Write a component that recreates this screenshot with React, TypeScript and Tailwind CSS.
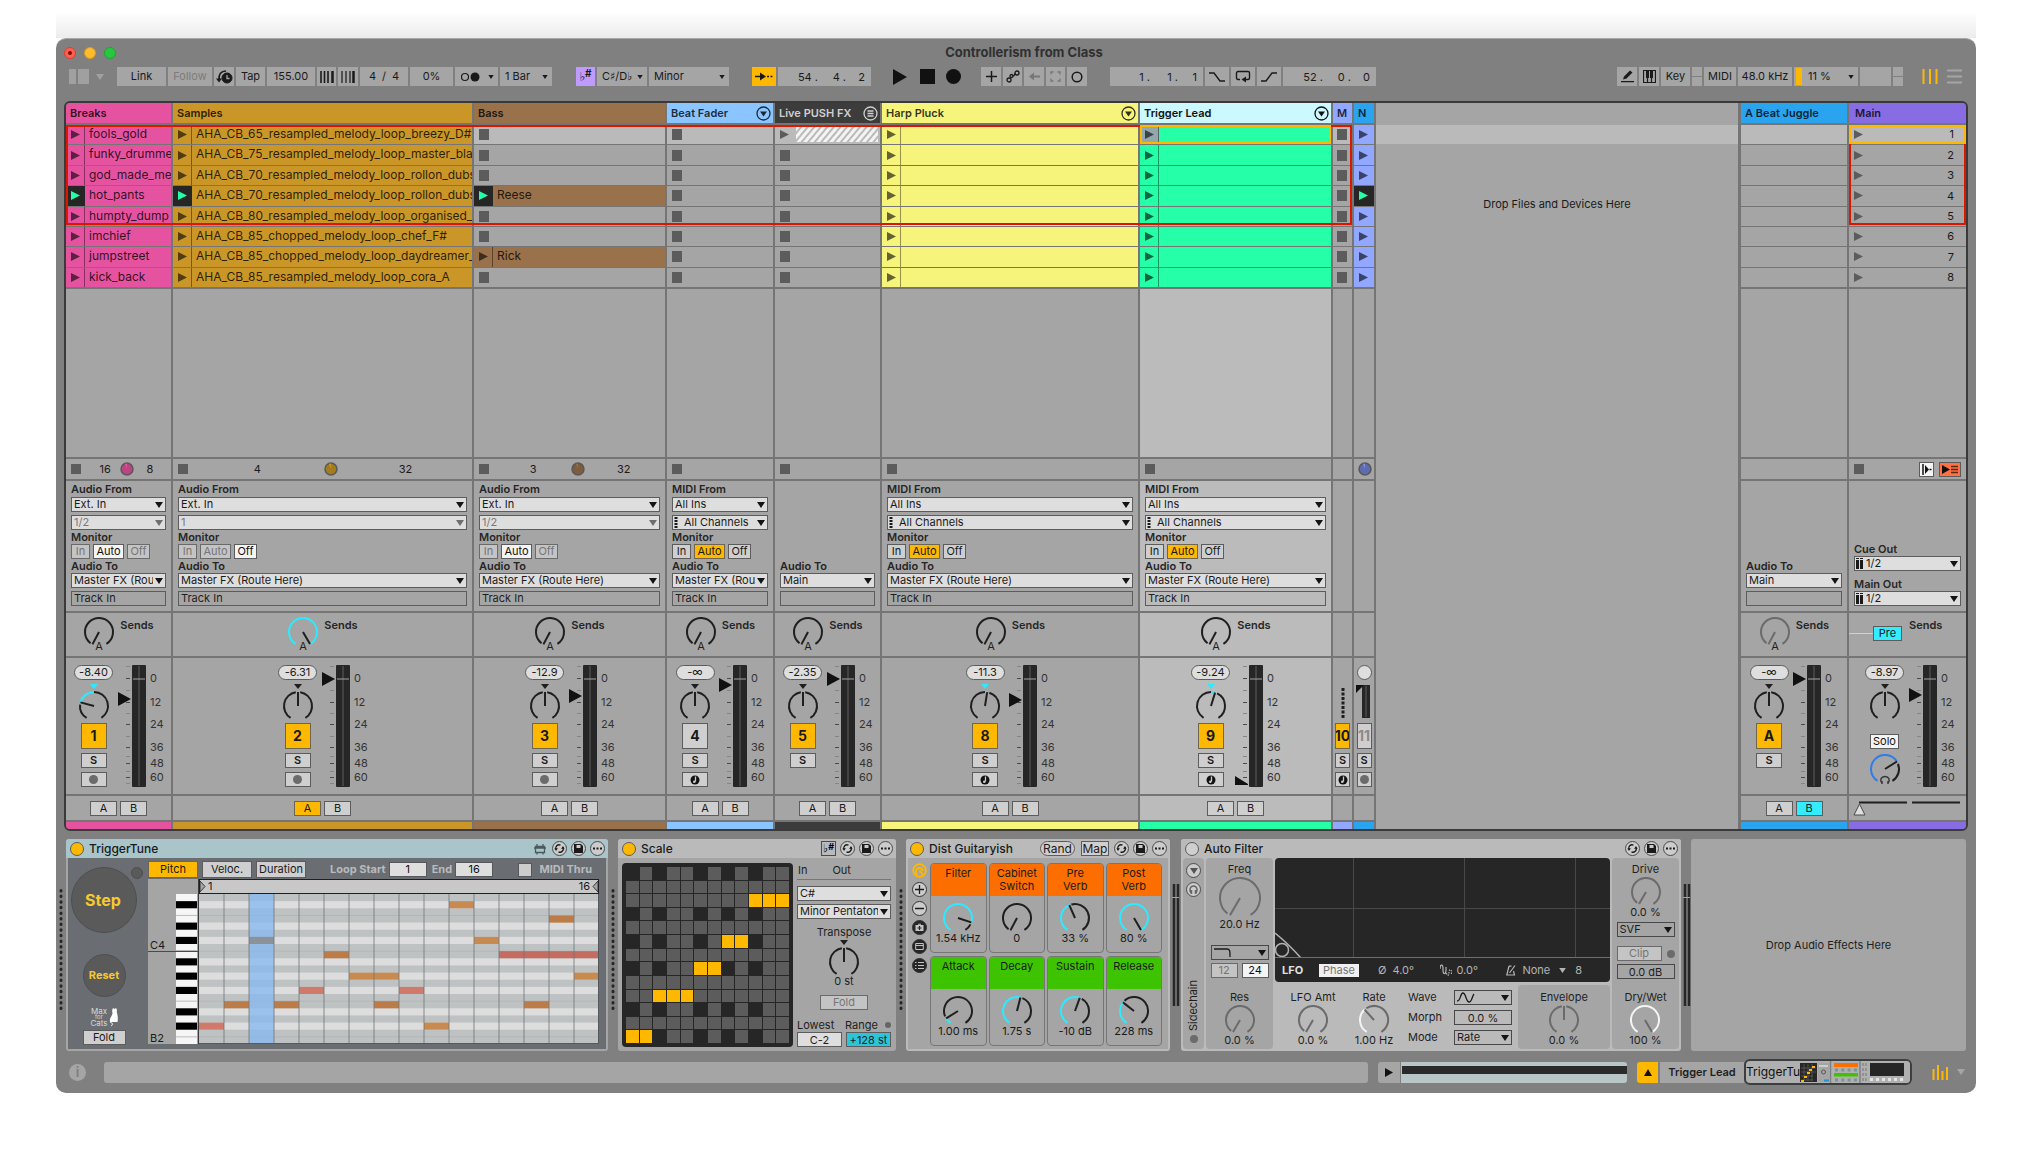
import React, { ReactNode } from 'react';
import clsx from 'clsx';

/* ---------- geometry helpers ---------- */

const polar = (cx: number, cy: number, r: number, deg: number) => {
  const a = ((deg - 90) * Math.PI) / 180;
  return [cx + r * Math.cos(a), cy + r * Math.sin(a)];
};

const arc = (cx: number, cy: number, r: number, from: number, to: number) => {
  const [x1, y1] = polar(cx, cy, r, from);
  const [x2, y2] = polar(cx, cy, r, to);
  return `M${x1.toFixed(2)} ${y1.toFixed(2)}A${r} ${r} 0 ${to - from > 180 ? 1 : 0} 1 ${x2.toFixed(2)} ${y2.toFixed(2)}`;
};

const CYAN = '#2ceaff';
const INK = '#1f1f1f';

type KnobProps = {
  r?: number;
  angle: number;
  fill?: string;
  from?: number;
  base?: string;
  marker?: string;
  tag?: string;
};

function Knob({ r = 14, angle, fill, from = -148, base = INK, marker, tag }: KnobProps) {
  const cx = r + 2;
  const top = marker ? 7 : 0;
  const cy = r + 2 + top;
  const end = 148;
  const [px, py] = polar(cx, cy, r, angle);
  const h = tag ? 35 : r * 2 + 3 + top;
  const lo = Math.max(Math.min(from, angle), -end);
  const hi = Math.min(Math.max(from, angle), end);
  const leftEnd = fill ? lo - (angle < from ? 9 : 0) : angle - 9;
  const rightStart = fill ? hi + (angle > from ? 9 : 0) : angle + 9;
  return (
    <svg width={cx * 2} height={h} viewBox={`0 0 ${cx * 2} ${h}`} fill="none" strokeWidth="2" className="block shrink-0">
      {leftEnd > -end && <path d={arc(cx, cy, r, -end, leftEnd)} stroke={base} />}
      {rightStart < end && <path d={arc(cx, cy, r, rightStart, end)} stroke={base} />}
      {fill && hi - lo > 3 && <path d={arc(cx, cy, r, lo, hi)} stroke={fill} />}
      <path d={`M${cx} ${cy}L${px.toFixed(2)} ${py.toFixed(2)}`} stroke={base} />
      {marker && <path d={`M${cx - 4} 1h8l-4 5z`} fill={marker} />}
      {tag && (
        <text x={cx} y="34" textAnchor="middle" fontSize="11" fill={INK}>
          {tag}
        </text>
      )}
    </svg>
  );
}

function Tri({ className = 'text-[#1c1c1c]' }: { className?: string }) {
  return (
    <svg width="9" height="9" viewBox="0 0 9 9" className={clsx('block', className)}>
      <path d="M0 0l9 4.5L0 9z" fill="currentColor" />
    </svg>
  );
}

function Down({ className, size = 8 }: { className?: string; size?: number }) {
  return (
    <svg width={size} height={size - 2} viewBox="0 0 8 6" className={className}>
      <path d="M0 0h8L4 6z" fill="currentColor" />
    </svg>
  );
}

/* ---------- small controls ---------- */

function Select({ label, value, dim, plain, icon, indent }: { label: string; value: string; dim?: boolean; plain?: boolean; icon?: ReactNode; indent?: boolean }) {
  return (
    <span className="relative block h-[15px] w-full">
      <select
        aria-label={label}
        className={clsx(
          'block h-full w-full appearance-none overflow-hidden rounded-none border pr-3 text-[11px] leading-[13px] whitespace-nowrap outline-none',
          indent ? 'pl-[11px]' : 'pl-0.5',
          plain ? 'border-[#484848] bg-transparent' : 'border-[#5c5c5c] bg-[#dedede]',
          dim ? 'text-[#7a7a7a]' : 'text-[#1a1a1a]',
        )}
      >
        <option>{value}</option>
      </select>
      {icon && <span className="pointer-events-none absolute top-0.5 left-0.5">{icon}</span>}
      <Down className={clsx('pointer-events-none absolute top-[5px] right-[3px]', dim ? 'text-[#6e6e6e]' : 'text-[#141414]')} />
    </span>
  );
}

function Box({ children, tone = 'light', className, label }: { children?: ReactNode; tone?: 'light' | 'white' | 'amber' | 'cyan' | 'off'; className?: string; label?: string }) {
  return (
    <button
      type="button"
      aria-label={label}
      className={clsx(
        'flex h-[15px] shrink-0 items-center justify-center overflow-hidden border text-[11px] leading-none whitespace-nowrap',
        tone === 'light' && 'border-[#5c5c5c] bg-[#cfcfcf] text-[#1a1a1a]',
        tone === 'white' && 'border-[#5c5c5c] bg-[#f4f4f4] text-[#111]',
        tone === 'amber' && 'border-[#6e6650] bg-[#ffb800] text-[#1a1a1a]',
        tone === 'cyan' && 'border-[#5c5c5c] bg-[#33ecff] text-[#1a1a1a]',
        tone === 'off' && 'border-[#6a6a6a] bg-[#c4c4c4] text-[#767676]',
        className,
      )}
    >
      {children}
    </button>
  );
}

const ChannelDots = () => (
  <svg width="4" height="11" viewBox="0 0 4 11">
    <path d="M2 0v11" stroke="#1a1a1a" strokeWidth="3" strokeDasharray="2 1" />
  </svg>
);
const StereoBars = () => (
  <svg width="8" height="11" viewBox="0 0 8 11" fill="#1a1a1a">
    <path d="M0 2h3v9H0zM4 2h3v9H4zM0 0h3v1H0zM4 0h3v1H4z" />
  </svg>
);

/* ---------- top bar ---------- */

function Cell({ children, className, label, spread }: { children?: ReactNode; className?: string; label?: string; spread?: boolean }) {
  return (
    <button
      type="button"
      aria-label={label}
      className={clsx('flex h-[19px] shrink-0 items-center text-[11px] leading-none whitespace-nowrap', spread ? 'justify-between pr-1 pl-[5px]' : 'justify-center', className)}
    >
      {children}
    </button>
  );
}

const G = 'bg-[#a5a5a5]';

function TimeField({ label, parts }: { label: string; parts: string[] }) {
  const w = ['w-10', 'w-7', 'w-[19px]'];
  return (
    <div role="group" aria-label={label} className="flex h-[19px] w-[93px] shrink-0 bg-[#a5a5a5]">
      {parts.map((p, i) => (
        <input key={i} aria-label={`${label} ${i + 1}`} defaultValue={p} className={clsx('h-full bg-transparent text-right text-[11px] outline-none', w[i])} />
      ))}
    </div>
  );
}

const Split = () => (
  <span className="flex h-[19px] w-2.5 shrink-0 flex-col gap-px">
    <span className="flex-1 bg-[#a5a5a5]" />
    <span className="flex-1 bg-[#a5a5a5]" />
  </span>
);

function Toolbar() {
  return (
    <div className="flex items-center gap-0.5 pr-[13px] pl-[13px] text-[#1a1a1a]">
      <button type="button" aria-label="Browser" className="flex h-[15px] w-5 gap-0.5">
        <span className="h-full w-[7px] bg-[#a0a0a0]" />
        <span className="h-full flex-1 bg-[#a0a0a0]" />
      </button>
      <Down className="mr-[11px] ml-[5px] text-[#a0a0a0]" />
      <Cell className={clsx(G, 'w-[49px]')}>Link</Cell>
      <Cell className={clsx(G, 'w-11 text-[#7c7c7c]')}>Follow</Cell>
      <Cell label="Metronome" className={clsx(G, 'w-5')}>
        <svg width="17" height="15" viewBox="0 0 17 15" fill="none" stroke="#1a1a1a">
          <circle cx="11" cy="9" r="5" fill="#1a1a1a" />
          <path d="M11 6v3.500h2.500" stroke="#a5a5a5" strokeWidth="1.3" />
          <path d="M3 11C2.500 5 5 2 10 2" strokeWidth="1.6" />
          <path d="M0 9.500h6l-3 4z" fill="#1a1a1a" stroke="none" />
        </svg>
      </Cell>
      <Cell className={clsx(G, 'w-[29px]')}>Tap</Cell>
      <Cell className={clsx(G, 'w-12')}>155.00</Cell>
      <Cell label="Nudge down" className={clsx(G, 'w-[19px]')}>
        <svg width="14" height="12" viewBox="0 0 14 12" stroke="#1a1a1a">
          <path d="M1 0v12M4.500 0v12M8 0v12" strokeWidth="1.6" />
          <path d="M12.500 0v12" strokeWidth="2.500" />
        </svg>
      </Cell>
      <Cell label="Nudge up" className={clsx(G, 'w-5')}>
        <svg width="14" height="12" viewBox="0 0 14 12" stroke="#1a1a1a">
          <path d="M1 0v12M5 0v12M9 0v12" strokeWidth="1.200" />
          <path d="M12.500 0v12" strokeWidth="2.500" />
        </svg>
      </Cell>
      <Cell className={clsx(G, 'w-12 gap-1.5')}>
        <span>4</span>
        <span>/</span>
        <span>4</span>
      </Cell>
      <Cell className={clsx(G, 'w-[43px]')}>0%</Cell>
      <Cell label="Metronome options" spread className={clsx(G, 'w-[43px]')}>
        <svg width="20" height="10" viewBox="0 0 20 10">
          <circle cx="5" cy="5" r="3.500" fill="none" stroke="#1a1a1a" strokeWidth="1.200" />
          <circle cx="15" cy="5" r="4.500" fill="#1a1a1a" />
        </svg>
        <Down size={6} />
      </Cell>
      <Cell spread className={clsx(G, 'w-[52px]')}>
        1 Bar <Down size={6} />
      </Cell>
      <Cell label="Scale mode" className="ml-[22px] w-[19px] bg-[#bf9bff] text-[12px] font-bold">
        ♭<span className="-mt-2 text-[10px]">#</span>
      </Cell>
      <Cell spread className={clsx(G, 'w-[50px]')}>
        C♯/D♭ <Down size={6} />
      </Cell>
      <Cell spread className={clsx(G, 'w-20')}>
        Minor <Down size={6} />
      </Cell>
      <Cell label="Follow playback" className="ml-[21px] w-6 bg-[#ffb800]">
        <svg width="18" height="9" viewBox="0 0 18 9">
          <path d="M0 4.500h6" stroke="#1a1a1a" strokeWidth="1.500" />
          <path d="M5 0.500l6 4-6 4z" fill="#1a1a1a" />
          <path d="M12 4.500h2M15.500 4.500h2" stroke="#1a1a1a" strokeWidth="1.500" />
        </svg>
      </Cell>
      <TimeField label="Position" parts={['54 .', '4 .', '2']} />
      <Cell label="Play" className="ml-[18px] w-[18px]">
        <svg width="16" height="18" viewBox="0 0 16 18">
          <path d="M1 1l14 8-14 8z" fill="#111" />
        </svg>
      </Cell>
      <Cell label="Stop" className="ml-2 w-[16px]">
        <span className="size-[15px] bg-[#111]" />
      </Cell>
      <Cell label="Record" className="ml-2 w-[16px]">
        <span className="size-[15px] rounded-full bg-[#111]" />
      </Cell>
      <Cell label="MIDI overdub" className={clsx(G, 'ml-[18px] w-5')}>
        <svg width="11" height="11" viewBox="0 0 11 11">
          <path d="M5.500 0v11M0 5.500h11" stroke="#1a1a1a" strokeWidth="1.500" />
        </svg>
      </Cell>
      <Cell label="Automation arm" className={clsx(G, 'w-[19px]')}>
        <svg width="14" height="13" viewBox="0 0 14 13" fill="none" stroke="#1a1a1a" strokeWidth="1.300">
          <circle cx="3" cy="10" r="2" />
          <circle cx="5.500" cy="6" r="1.500" />
          <circle cx="11" cy="3" r="2" />
          <path d="M7 6c2 0 1-2.500 2.500-2.500" />
        </svg>
      </Cell>
      <Cell label="Re-enable automation" className={clsx(G, 'w-5')}>
        <svg width="11" height="9" viewBox="0 0 11 9" fill="none" stroke="#777" strokeWidth="1.800">
          <path d="M11 4.500H4" />
          <path d="M0 4.500L5 .5v8z" fill="#777" stroke="none" />
        </svg>
      </Cell>
      <Cell label="Capture MIDI" className={clsx(G, 'w-[19px]')}>
        <svg width="11" height="11" viewBox="0 0 11 11" fill="none" stroke="#777" strokeWidth="1.300">
          <path d="M1 3.500V1h2.500M7.500 1H10v2.500M10 7.500V10H7.500M3.500 10H1V7.500" />
        </svg>
      </Cell>
      <Cell label="Session record" className={clsx(G, 'w-5')}>
        <svg width="12" height="12" viewBox="0 0 12 12" fill="none" stroke="#1a1a1a" strokeWidth="1.500">
          <circle cx="6" cy="6" r="4.800" />
        </svg>
      </Cell>
      <span className="w-[19px]" />
      <TimeField label="Loop start" parts={['1 .', '1 .', '1']} />
      <Cell label="Punch in" className={clsx(G, 'w-6')}>
        <svg width="16" height="10" viewBox="0 0 16 10" fill="none" stroke="#1a1a1a" strokeWidth="1.400">
          <path d="M0 1h5l6 8h5" />
        </svg>
      </Cell>
      <Cell label="Loop" className={clsx(G, 'w-6')}>
        <svg width="16" height="13" viewBox="0 0 16 13" fill="none" stroke="#1a1a1a" strokeWidth="1.400">
          <path d="M5 9.500H3a1.500 1.500 0 0 1-1.500-1.500V3A1.500 1.500 0 0 1 3 1.500h10A1.500 1.500 0 0 1 14.500 3v5A1.500 1.500 0 0 1 13 9.500h-3" />
          <path d="M11 6.500v6L6.500 9.500z" fill="#1a1a1a" stroke="none" />
        </svg>
      </Cell>
      <Cell label="Punch out" className={clsx(G, 'w-6')}>
        <svg width="16" height="10" viewBox="0 0 16 10" fill="none" stroke="#1a1a1a" strokeWidth="1.400">
          <path d="M0 9h5l6-8h5" />
        </svg>
      </Cell>
      <TimeField label="Loop length" parts={['52 .', '0 .', '0']} />

      <Cell label="Draw mode" className={clsx(G, 'ml-auto w-5')}>
        <svg width="15" height="13" viewBox="0 0 15 13" fill="#1a1a1a">
          <path d="M3 9.500L4 6.500 10 .5l2.500 2L6.500 8.500z" />
          <path d="M1 11h13v1.300H1z" />
        </svg>
      </Cell>
      <Cell label="Computer MIDI keyboard" className={clsx(G, 'w-5')}>
        <svg width="13" height="13" viewBox="0 0 13 13">
          <path d="M.5.500h12v12H.5zM4.500 7v6M8.500 7v6" fill="none" stroke="#1a1a1a" strokeWidth="1.200" />
          <path d="M3 0h3v8H3zM7 0h3v8H7z" fill="#1a1a1a" />
        </svg>
      </Cell>
      <Cell className={clsx(G, 'w-[29px]')}>Key</Cell>
      <Split />
      <Cell className={clsx(G, 'w-8')}>MIDI</Cell>
      <Cell className={clsx(G, 'w-[54px]')}>48.0 kHz</Cell>
      <Cell className={clsx(G, 'w-16 pr-1 pl-0.5')}>
        <span className="h-[17px] w-1.5 bg-[#ffb800]" />
        <span className="ml-1.5">11 %</span>
        <Down size={6} className="ml-auto" />
      </Cell>
      <Cell label="Disk overload" className={clsx(G, 'w-[31px]')} />
      <Split />
      <Cell label="Session view" className="ml-4 w-[18px]">
        <svg width="16" height="15" viewBox="0 0 16 15">
          <path d="M1.500 0v15M8 0v15M14.500 0v15" stroke="#ffb800" strokeWidth="2" />
        </svg>
      </Cell>
      <Cell label="Arrangement view" className="ml-1 w-[18px]">
        <svg width="15" height="15" viewBox="0 0 15 15">
          <path d="M0 1.500h15M0 7.500h15M0 13.500h15" stroke="#a5a5a5" strokeWidth="2" />
        </svg>
      </Cell>
    </div>
  );
}

/* ---------- session tracks ---------- */

type Tone = 'pink' | 'gold' | 'brown' | 'sky' | 'dark' | 'yellow' | 'green' | 'lilac' | 'blue' | 'purple';
const clipBg: Record<Tone, string> = {
  pink: 'bg-[#e553a0]',
  gold: 'bg-[#c99627]',
  brown: 'bg-[#99724b]',
  sky: 'bg-[#8bc5ff]',
  dark: 'bg-[#3c3c3c]',
  yellow: 'bg-[#f7f47c]',
  green: 'bg-[#25ffa8]',
  lilac: 'bg-[#92a7ff]',
  blue: 'bg-[#2aa4ee]',
  purple: 'bg-[#886ce4]',
};

type Clip = { name?: string; kind: 'clip' | 'stop' | 'blank' | 'hatch' | 'scene'; playing?: boolean; selected?: boolean };
const repeat = (c: Clip): Clip[] => Array.from({ length: 8 }, () => ({ ...c }));

function ClipRow({ clip, tone, first, narrow }: { clip: Clip; tone: Tone; first: boolean; narrow?: boolean }) {
  const empty = first ? 'bg-[#bababa]' : 'bg-[#a5a5a5]';
  if (clip.kind === 'blank') return <div className={empty} />;
  if (clip.kind === 'stop')
    return (
      <button type="button" aria-label="Stop clip" className={clsx('flex items-center', narrow ? 'pl-1' : 'pl-[5px]', empty)}>
        <span className="h-[11px] w-2.5 bg-[#5c5c5c]" />
      </button>
    );
  if (clip.kind === 'hatch')
    return (
      <button type="button" aria-label="Launch group" className={clsx('flex items-center pl-[5px]', empty)}>
        <Tri className="text-[#5c5c5c]" />
        <svg height="15" className="mr-0.5 ml-[7px] w-0 flex-1">
          <defs>
            <pattern id="hatch" width="5" height="5" patternUnits="userSpaceOnUse" patternTransform="rotate(40)">
              <path d="M0 0h3v5H0z" fill="#f4f4f4" />
            </pattern>
          </defs>
          <rect width="100%" height="15" fill="url(#hatch)" />
        </svg>
      </button>
    );
  if (clip.kind === 'scene')
    return (
      <button type="button" className={clsx('relative flex items-center justify-between pr-3 pl-[5px] text-[11px] text-[#1a1a1a]', empty)}>
        <Tri className="text-[#5c5c5c]" />
        {clip.name}
        {clip.selected && <span className="absolute inset-0 z-20 border-2 border-[#ffb800]" />}
      </button>
    );
  return (
    <div className={clsx('relative flex min-w-0 items-stretch', clipBg[tone])}>
      <button
        type="button"
        aria-label={`Launch ${clip.name || 'clip'}`}
        className={clsx(
          'flex shrink-0 items-center pl-[5px]',
          narrow ? 'w-full' : 'w-[19px]',
          clip.playing && 'bg-[#262626]',
          clip.selected && 'bg-[#92a8ad]',
          !clip.playing && !narrow && 'border-r border-black/40',
        )}
      >
        <Tri className={clip.playing ? 'text-[#25ffa8]' : 'text-black/60'} />
      </button>
      {!narrow && <span className="min-w-0 flex-1 overflow-hidden pl-1 text-[12px] leading-[18px] whitespace-nowrap text-black/80">{clip.name}</span>}
      {clip.selected && <span className="absolute inset-0 z-20 border-2 border-[#ffb800]" />}
    </div>
  );
}

type Track = {
  name: string;
  tone: Tone;
  width: string;
  clips: Clip[];
  fold?: 'down' | 'menu';
  status?: [string, string, string];
  stop?: boolean;
  io?: { kind: 'audio' | 'midi' | 'out' | 'main' | 'none'; chan?: string; mon?: string; to?: string };
  send?: 'off' | 'full' | 'gray' | 'pre' | 'none';
  vol?: string;
  pan?: number;
  num?: string;
  on?: boolean;
  arm?: 'audio' | 'midi' | 'none';
  fader?: number;
  cross?: '' | 'A' | 'B' | 'none' | 'slider';
  selected?: boolean;
};

const brk = ['fools_gold', 'funky_drumme', 'god_made_me', 'hot_pants', 'humpty_dump', 'imchief', 'jumpstreet', 'kick_back'];
const smp = [
  'AHA_CB_65_resampled_melody_loop_breezy_D#m',
  'AHA_CB_75_resampled_melody_loop_master_bla',
  'AHA_CB_70_resampled_melody_loop_rollon_dubs',
  'AHA_CB_70_resampled_melody_loop_rollon_dubs',
  'AHA_CB_80_resampled_melody_loop_organised_',
  'AHA_CB_85_chopped_melody_loop_chef_F#',
  'AHA_CB_85_chopped_melody_loop_daydreamer_',
  'AHA_CB_85_resampled_melody_loop_cora_A',
];

const tracks: Track[] = [
  { name: 'Breaks', tone: 'pink', width: 'w-[105px]', clips: brk.map((name, i) => ({ name, kind: 'clip', playing: i === 3 })), status: ['16', '#e553a0', '8'], stop: true, io: { kind: 'audio', chan: '1/2', mon: 'Auto', to: 'Master FX (Route Here)' }, send: 'off', vol: '-8.40', pan: -75, num: '1', on: true, arm: 'audio', fader: 699, cross: '' },
  { name: 'Samples', tone: 'gold', width: 'w-[299px]', clips: smp.map((name, i) => ({ name, kind: 'clip', playing: i === 3 })), status: ['4', '#c99627', '32'], stop: true, io: { kind: 'audio', chan: '1', mon: 'Off', to: 'Master FX (Route Here)' }, send: 'full', vol: '-6.31', pan: 0, num: '2', on: true, arm: 'audio', fader: 679, cross: 'A' },
  { name: 'Bass', tone: 'brown', width: 'w-[191px]', clips: repeat({ kind: 'stop' }).map((c, i) => (i === 3 ? { kind: 'clip', name: 'Reese', playing: true } : i === 6 ? { kind: 'clip', name: 'Rick' } : c)), status: ['3', '#99724b', '32'], stop: true, io: { kind: 'audio', chan: '1/2', mon: 'Auto', to: 'Master FX (Route Here)' }, send: 'off', vol: '-12.9', pan: 0, num: '3', on: true, arm: 'audio', fader: 696, cross: '' },
  { name: 'Beat Fader', tone: 'sky', width: 'w-[106px]', fold: 'down', clips: repeat({ kind: 'stop' }), stop: true, io: { kind: 'midi', mon: 'Auto', to: 'Master FX (Route Here)' }, send: 'off', vol: '-∞', pan: 0, num: '4', on: false, arm: 'midi', fader: 685, cross: '' },
  { name: 'Live PUSH FX', tone: 'dark', width: 'w-[105px]', fold: 'menu', clips: repeat({ kind: 'stop' }).map((c, i) => (i === 0 ? { kind: 'hatch' } : c)), stop: true, io: { kind: 'out' }, send: 'off', vol: '-2.35', pan: 0, num: '5', on: true, arm: 'none', fader: 679, cross: '' },
  { name: 'Harp Pluck', tone: 'yellow', width: 'w-64', fold: 'down', clips: repeat({ kind: 'clip' }), stop: true, io: { kind: 'midi', mon: 'Auto', to: 'Master FX (Route Here)' }, send: 'off', vol: '-11.3', pan: 9, num: '8', on: true, arm: 'midi', fader: 700, cross: '' },
  { name: 'Trigger Lead', tone: 'green', width: 'w-[191px]', fold: 'down', selected: true, clips: repeat({ kind: 'clip' }).map((c, i) => ({ ...c, selected: i === 0 })), stop: true, io: { kind: 'midi', mon: 'Auto', to: 'Master FX (Route Here)' }, send: 'off', vol: '-9.24', pan: 17, num: '9', on: true, arm: 'midi', fader: 783, cross: '' },
];
const returnTrack: Track = { name: 'A Beat Juggle', tone: 'blue', width: 'ml-px w-[106px]', clips: repeat({ kind: 'blank' }), io: { kind: 'out' }, send: 'gray', vol: '-∞', pan: 0, num: 'A', on: true, arm: 'none', fader: 679, cross: 'B' };
const mainTrack: Track = {
  name: 'Main', tone: 'purple', width: 'w-[117px]', stop: true, io: { kind: 'main' }, send: 'pre', vol: '-8.97', pan: 0, fader: 695, cross: 'slider',
  clips: Array.from({ length: 8 }, (_, i) => ({ kind: 'scene', name: String(i + 1), selected: i === 0 })),
};

const IoLabel = ({ children, className = 'h-[14px]' }: { children: ReactNode; className?: string }) => (
  <div className={clsx('flex shrink-0 items-center text-[11px] font-semibold whitespace-nowrap text-[#262626]', className)}>{children}</div>
);

function Io({ t }: { t: Track }) {
  const io = t.io!;
  if (io.kind === 'out')
    return (
      <div className="flex h-full flex-col justify-end px-[5px] pb-[5px]">
        <IoLabel>Audio To</IoLabel>
        <Select label="Audio To" value="Main" />
        <div className="mt-[3px] h-[15px] border border-[#5c5c5c]" />
      </div>
    );
  if (io.kind === 'main')
    return (
      <div className="flex h-full flex-col justify-end px-[5px] pb-[5px]">
        <IoLabel>Cue Out</IoLabel>
        <Select label="Cue Out" value="1/2" indent icon={<StereoBars />} />
        <IoLabel className="mt-[6px] h-[14px]">Main Out</IoLabel>
        <Select label="Main Out" value="1/2" indent icon={<StereoBars />} />
      </div>
    );
  const midi = io.kind === 'midi';
  return (
    <div className="flex flex-col px-[5px] pt-px">
      <IoLabel className="h-[15px]">{midi ? 'MIDI From' : 'Audio From'}</IoLabel>
      <Select label={`${t.name} input`} value={midi ? 'All Ins' : 'Ext. In'} />
      <div className="h-[3px]" />
      {midi ? <Select label={`${t.name} channel`} value="All Channels" indent icon={<ChannelDots />} /> : <Select label={`${t.name} channel`} value={io.chan!} dim />}
      <IoLabel>Monitor</IoLabel>
      <div className="flex gap-[3px]">
        {['In', 'Auto', 'Off'].map((m) => (
          <Box key={m} tone={io.mon === m ? (midi ? 'amber' : 'white') : midi ? 'light' : 'off'} className={m === 'In' ? 'w-[19px]' : m === 'Auto' ? 'w-[31px]' : 'w-[23px]'}>
            {m}
          </Box>
        ))}
      </div>
      <IoLabel>Audio To</IoLabel>
      <Select label={`${t.name} output`} value={io.to!} />
      <div className="mt-[3px] h-[15px] border border-[#5c5c5c] pl-0.5 text-[11px] leading-[13px] text-[#1f1f1f]">Track In</div>
    </div>
  );
}

function Fader({ y }: { y: number }) {
  const ticks = [3, 15, 27, 39, 50, 61, 73, 84, 93, 100, 108, 114, 120];
  const major = [15, 39, 61, 84, 100, 114];
  const cy = y - 664;
  return (
    <svg width="47" height="124" viewBox="0 0 47 124" className="block shrink-0">
      {ticks.map((t) => (
        <path key={t} d={`M9 ${t - 0.5}h4`} stroke={major.includes(t) ? '#4a4a4a' : '#858585'} />
      ))}
      <rect x="15" y="1" width="14" height="122" rx="1" fill="#262626" />
      <path d="M22 2v120" stroke="#5e5e5e" />
      <path d="M16 15h12" stroke="#a5a5a5" />
      <path d={cy > 112 ? `M1 ${cy - 7}l13 8v1H1z` : `M1 ${cy - 7}l13 7-13 7z`} fill="#111" />
      {major.map((t, i) => (
        <text key={t} x="33" y={t + 3} fontSize="11" fill="#333">
          {['0', '12', '24', '36', '48', '60'][i]}
        </text>
      ))}
    </svg>
  );
}

function ArmIcon({ kind }: { kind: 'audio' | 'midi' }) {
  return kind === 'audio' ? (
    <span className="size-[9px] rounded-full bg-[#6b6b6b]" />
  ) : (
    <svg width="10" height="10" viewBox="0 0 10 10">
      <circle cx="5" cy="5" r="4.500" fill="#111" />
      <path d="M5.500 1.500v5" stroke="#cfcfcf" strokeWidth="1.300" />
      <circle cx="4.300" cy="6.800" r="1.300" fill="#cfcfcf" />
    </svg>
  );
}

function Strip({ t }: { t: Track }) {
  const pan = t.pan ?? 0;
  return (
    <div className={clsx('flex justify-center pt-[6px]', !t.num && 'pl-1')}>
      <div className="flex w-10 flex-col items-center pt-px">
        <Box className="w-[39px] rounded-full !bg-[#dedede]">{t.vol}</Box>
        <div className="mt-[3px]">
          <Knob angle={pan} from={0} fill={pan ? CYAN : undefined} marker={pan ? CYAN : INK} />
        </div>
        {t.num ? (
          <>
            <Box tone={t.on ? 'amber' : 'light'} className="mt-0.5 h-[26px] w-[26px] text-[14px] font-bold">
              {t.num}
            </Box>
            <Box className="mt-1 w-[26px] font-semibold">S</Box>
            {t.arm !== 'none' && (
              <Box label="Arm" className="mt-1 w-[26px]">
                <ArmIcon kind={t.arm as 'audio' | 'midi'} />
              </Box>
            )}
          </>
        ) : (
          <>
            <Box tone="white" className="mt-[13px] w-[29px]">
              Solo
            </Box>
            <svg width="32" height="34" viewBox="0 0 32 34" fill="none" strokeWidth="2" className="mt-[3px]">
              <path d={arc(16, 17, 14, -148, 58)} stroke="#2f7de8" />
              <path d={arc(16, 17, 14, 68, 148)} stroke={INK} />
              <path d="M16 17L28 9.500" stroke={INK} />
              <path d="M13 31c-2.500-3-1-6.500 3-6.500s5.500 3.500 3 6.500M13 29v3M19 29v3" stroke="#333" strokeWidth="1.400" />
            </svg>
          </>
        )}
      </div>
      <div className="ml-[3px]">
        <Fader y={t.fader!} />
      </div>
    </div>
  );
}

const Pie = ({ color, small }: { color: string; small?: boolean }) => (
  <svg width="14" height="14" viewBox="0 0 14 14" className="block">
    <circle cx="7" cy="7" r="6" fill={color} stroke="#5c5c5c" strokeWidth="1.500" />
    <circle cx="7" cy="7" r="5.500" fill="#000" opacity={small ? 0.25 : 0.18} />
    <path d="M7 7V1.500L5 2z" fill={color} />
  </svg>
);

function Header({ t }: { t: Track }) {
  return (
    <div
      className={clsx(
        'flex h-5 items-center justify-between overflow-hidden pr-1 text-[11px] font-semibold whitespace-nowrap',
        t.tone === 'purple' ? 'pl-[6px]' : 'pl-1',
        t.selected ? 'bg-[#ccf8ff] text-[#111]' : clipBg[t.tone],
        t.tone === 'dark' ? 'text-[#d0d0d0]' : !t.selected && 'text-black/80',
      )}
    >
      {t.name}
      {t.fold && (
        <button type="button" aria-label={`Fold ${t.name}`} className="-mr-0.5 shrink-0">
          <svg width="15" height="15" viewBox="0 0 15 15" fill="none" stroke="currentColor" className="block">
            <circle cx="7.500" cy="7.500" r="6.500" strokeWidth="1.300" />
            {t.fold === 'down' ? <path d="M4 5.500h7l-3.500 5z" fill="currentColor" stroke="none" /> : <path d="M4.500 5h6M4.500 7.500h6M4.500 10h6" strokeWidth="1.300" />}
          </svg>
        </button>
      )}
    </div>
  );
}

function TrackColumn({ t }: { t: Track }) {
  const bg = t.selected ? 'bg-[#bbbbbb]' : 'bg-[#a5a5a5]';
  return (
    <section aria-label={t.name} className={clsx('flex shrink-0 flex-col gap-0.5', t.width)}>
      <Header t={t} />
      <div className="relative grid h-[162px] grid-rows-8 gap-px">
        {t.clips.map((c, i) => (
          <ClipRow key={i} clip={c} tone={t.tone} first={i === 0} />
        ))}
        {t.tone === 'purple' && <span className="pointer-events-none absolute inset-x-0 top-0 h-[100px] border-2 border-[#dd1600]" />}
      </div>
      <div className={clsx('h-[168px]', bg)} />
      <div className="flex h-5 items-center bg-[#a5a5a5] pl-[5px] text-[11px] text-[#1a1a1a]">
        {t.stop && <span className="h-2.5 w-2.5 shrink-0 bg-[#5c5c5c]" />}
        {t.status && (
          <div className="ml-[3px] grid flex-1 grid-cols-3 place-items-center px-[10%]">
            <span>{t.status[0]}</span>
            <Pie color={t.status[1]} />
            <span>{t.status[2]}</span>
          </div>
        )}
        {t.send === 'pre' && (
          <div className="mr-[5px] ml-auto flex gap-[5px]">
            <Box label="Back to arrangement" tone="white">
              <svg width="13" height="11" viewBox="0 0 13 11">
                <path d="M3 0v11" stroke="#111" strokeWidth="1.500" />
                <path d="M5 1l4 4.500L5 10z" fill="#111" />
                <path d="M9.500 5.500h2" stroke="#111" strokeWidth="1.500" />
              </svg>
            </Box>
            <Box label="Stop all" className="!bg-[#ff7043]">
              <svg width="20" height="11" viewBox="0 0 20 11">
                <path d="M2 1l8 4.500L2 10z" fill="#111" />
                <path d="M11 2.500h7M11 5.500h7M11 8.500h7" stroke="#5a2a10" strokeWidth="1.500" />
              </svg>
            </Box>
          </div>
        )}
      </div>
      <div className={clsx('h-[130px]', bg)}>
        <Io t={t} />
      </div>
      <div className={clsx('flex h-[43px] justify-center pt-[3px]', bg)}>
        {t.send === 'pre' ? (
          <div className="flex flex-1 items-start pt-px">
            <span className="mt-4 h-px w-6 bg-[#d0d0d0]" />
            <Box tone="cyan" className="mt-[9px] w-[29px]">
              Pre
            </Box>
            <span className="ml-[7px] text-[11px] font-semibold text-[#262626]">Sends</span>
          </div>
        ) : (
          <>
            <Knob angle={t.send === 'full' ? 150 : -152} fill={t.send === 'full' ? CYAN : undefined} base={t.send === 'gray' ? '#6b6b6b' : INK} tag="A" />
            <span className="mt-px ml-[5px] text-[11px] font-semibold text-[#262626]">Sends</span>
          </>
        )}
      </div>
      <div className={clsx('h-[136px]', bg)}>
        <Strip t={t} />
      </div>
      <div className={clsx('flex h-6 justify-center gap-[3px] pt-[5px]', bg)}>
        {t.cross === 'slider' ? (
          <svg width="110" height="19" viewBox="0 0 110 19">
            <path d="M6 1.500h48M59 1.500h48" stroke="#1f1f1f" strokeWidth="2" />
            <path d="M1 14h11L6.500 3z" fill="#dedede" stroke="#4a4a4a" />
          </svg>
        ) : (
          <>
            <Box tone={t.cross === 'A' ? 'amber' : 'light'} className="w-[27px]">
              A
            </Box>
            <Box tone={t.cross === 'B' ? 'cyan' : 'light'} className="w-[27px]">
              B
            </Box>
          </>
        )}
      </div>
      <div className={clsx('h-[7px]', clipBg[t.tone])} />
    </section>
  );
}

function NarrowTrack({ name, head, num, on, midi }: { name: string; head: Tone; num: string; on: boolean; midi?: boolean }) {
  const bg = 'bg-[#a5a5a5]';
  return (
    <section aria-label={name} className={clsx('flex shrink-0 flex-col gap-0.5', midi ? 'w-[19px]' : 'w-5')}>
      <div className={clsx('flex h-5 items-center pl-1 text-[11px] font-semibold text-black/80', clipBg[head])}>{name}</div>
      <div className="grid h-[162px] grid-rows-8 gap-px">
        {Array.from({ length: 8 }, (_, i) => (
          <ClipRow key={i} narrow tone="lilac" first={i === 0} clip={midi ? { kind: 'stop' } : { kind: 'clip', playing: i === 3 }} />
        ))}
      </div>
      <div className={clsx('h-[168px]', bg)} />
      <div className={clsx('flex h-5 items-center pl-1', bg)}>{!midi && <Pie color="#8090e8" small />}</div>
      <div className={clsx('h-[130px]', bg)} />
      <div className={clsx('h-[43px]', bg)} />
      <div className={clsx('flex h-[136px] flex-col items-center pt-[7px]', bg)}>
        {midi ? (
          <svg width="14" height="55" viewBox="0 0 14 55">
            <path d="M7 23v31" stroke="#1f1f1f" strokeWidth="3" strokeDasharray="3 1.500" />
          </svg>
        ) : (
          <>
            <span className="size-[15px] rounded-full border border-[#5c5c5c] bg-[#dedede]" />
            <svg width="16" height="40" viewBox="0 0 16 40">
              <rect x="6" y="5" width="8" height="33" fill="#262626" />
              <path d="M10 6v31" stroke="#5e5e5e" />
              <path d="M0 5h8l-8 8z" fill="#111" />
            </svg>
          </>
        )}
        <Box tone={on ? 'amber' : 'light'} className={clsx('mt-[3px] h-[26px] w-[15px] text-[14px] font-bold', !on && '!text-[#8a8a8a]')}>
          {num}
        </Box>
        <Box className="mt-1 w-[15px] font-semibold">S</Box>
        <Box label="Arm" className="mt-1 w-[15px]">
          <ArmIcon kind={midi ? 'midi' : 'audio'} />
        </Box>
      </div>
      <div className={clsx('h-6', bg)} />
      <div className={clsx('h-[7px]', clipBg[head])} />
    </section>
  );
}

function Session() {
  return (
    <main className="mx-2 mt-[15px] flex gap-0.5 overflow-hidden rounded-md border-2 border-[#3a3a3a] bg-[#757575]">
      <div className="relative flex shrink-0 gap-0.5">
        {tracks.map((t) => (
          <TrackColumn key={t.name} t={t} />
        ))}
        <NarrowTrack name="M" head="lilac" num="10" on midi />
        <span className="pointer-events-none absolute inset-x-0 top-[22px] z-10 h-[100px] border-2 border-[#dd1600]" />
      </div>
      <NarrowTrack name="N" head="blue" num="11" on={false} />
      <div className="flex min-w-0 flex-1 flex-col items-center bg-[#a5a5a5] pt-[22px]">
        <div className="h-[19px] w-full bg-[#bababa]" />
        <p className="mt-[52px] text-[11px] text-[#1a1a1a]">Drop Files and Devices Here</p>
      </div>
      <TrackColumn t={returnTrack} />
      <TrackColumn t={mainTrack} />
    </main>
  );
}

/* ---------- devices ---------- */

const Circle = ({ children, label }: { children: ReactNode; label: string }) => (
  <button type="button" aria-label={label} className="flex size-[15px] shrink-0 items-center justify-center rounded-full border border-[#4a4a4a] bg-[#cccccc]">
    {children}
  </button>
);

function DeviceIcons() {
  return (
    <div className="flex gap-1">
      <Circle label="Hot-swap">
        <svg width="11" height="11" viewBox="0 0 11 11" fill="none" stroke="#1a1a1a" strokeWidth="1.300">
          <path d="M2 6.500A3.300 3.300 0 0 1 6.500 2.200M9 4.500A3.300 3.300 0 0 1 4.500 8.800" />
          <path d="M.3 5.200h3.600L2 8zM10.700 5.800H7.100L9 3z" fill="#1a1a1a" stroke="none" />
        </svg>
      </Circle>
      <Circle label="Save preset">
        <svg width="9" height="9" viewBox="0 0 9 9">
          <path d="M0 0h7l2 2v7H0z" fill="#1a1a1a" />
          <path d="M2.500 1h4v3h-4z" fill="#ccc" />
        </svg>
      </Circle>
      <Circle label="More">
        <svg width="9" height="3" viewBox="0 0 9 3" fill="#1a1a1a">
          <path d="M0 .5h2v2H0zM3.500.500h2v2h-2zM7 .5h2v2H7z" />
        </svg>
      </Circle>
    </div>
  );
}

function Device({ title, on = true, width, shell, head, extra, children }: { title: string; on?: boolean; width: string; shell: string; head: string; extra?: ReactNode; children: ReactNode }) {
  return (
    <section aria-label={title} className={clsx('flex h-[212px] shrink-0 flex-col overflow-hidden rounded-[3px]', width, shell)}>
      <header className={clsx('flex h-[19px] shrink-0 items-center gap-1 pr-[3px] pl-1', head)}>
        <button type="button" aria-label={`${title} on`} className={clsx('size-[14px] rounded-full border border-[#5c5c5c]', on ? 'bg-[#ffb800]' : 'bg-[#cfcfcf]')} />
        <h2 className="mr-auto ml-px text-[12px] leading-none font-medium text-[#1a1a1a]">{title}</h2>
        {extra}
        <DeviceIcons />
      </header>
      {children}
    </section>
  );
}

const Dots = () => (
  <svg width="10" height="212" viewBox="0 0 10 212" className="shrink-0">
    <path d="M5 51.500v119" stroke="#262626" strokeWidth="3" strokeLinecap="round" strokeDasharray="0.500 5.100" />
  </svg>
);
const Meter = ({ wide }: { wide?: boolean }) => (
  <svg width={wide ? 11 : 10} height="212" viewBox={wide ? '0 0 11 212' : '0 0 10 212'} className="shrink-0">
    <path d="M4 45v122M8 45v122" stroke="#262626" strokeWidth="2.500" />
    <path d="M2 58.500h7" stroke="#a5a5a5" />
  </svg>
);

const lightRows = [1, 4, 6, 9, 11, 13, 16, 18];
const notes: [number, number, string][] = [
  [0, 18, '#d07a6c'], [1, 15, '#bd7c47'], [2, 6, '#8b929a'], [3, 15, '#bd7c47'], [4, 13, '#d07a6c'], [5, 8, '#bd7c47'],
  [6, 11, '#c98a4f'], [7, 11, '#c98a4f'], [7, 15, '#bd7c47'], [8, 13, '#d07a6c'], [9, 18, '#c98a4f'], [10, 1, '#c98a4f'],
  [11, 6, '#c98a4f'], [12, 8, '#c46c5f'], [13, 8, '#c46c5f'], [14, 8, '#c46c5f'], [15, 8, '#c46c5f'], [13, 15, '#bd7c47'],
  [14, 3, '#bd7c47'], [15, 11, '#c98a4f'],
];

function PianoRoll() {
  const rh = 150 / 21;
  const rows = Array.from({ length: 21 }, (_, i) => i);
  return (
    <svg width="400" height="150" viewBox="0 0 400 150" className="block" role="img" aria-label="Note pattern">
      <rect width="400" height="150" fill="#bfc2c3" />
      {rows.map((r) => (lightRows.includes(r) ? <rect key={r} y={r * rh} width="400" height={rh} fill="#dddddd" /> : null))}
      {[3, 8, 15, 20].map((r) => (
        <path key={r} d={`M0 ${r * rh}h400`} stroke="#b0b3b5" strokeWidth="0.800" />
      ))}
      <rect x="50" width="25" height="150" fill="#84b8f0" opacity="0.750" />
      {notes.map(([c, r, f], i) => (
        <rect key={i} x={c * 25} y={r * rh} width="25" height={rh} fill={f} />
      ))}
      {Array.from({ length: 15 }, (_, i) => (
        <path key={i} d={`M${(i + 1) * 25} 0v150`} stroke="#707478" strokeWidth="1" opacity="0.800" />
      ))}
      <path d="M399.500 0v150M0 149.500h400" stroke="#55585c" />
    </svg>
  );
}

function TriggerTune() {
  const rh = 150 / 21;
  const labelCls = 'text-[11px] font-bold text-[#b9bbbd] whitespace-nowrap';
  const inputCls = 'h-[15px] w-[38px] border border-[#55585c] bg-[#dedede] text-center text-[11px] text-[#111] outline-none';
  return (
    <Device
      title="TriggerTune"
      width="w-[542px]"
      shell="bg-[#a5a5a5]"
      head="bg-[#a9c5ca]"
      extra={
        <svg width="12" height="12" viewBox="0 0 12 12" fill="none" stroke="#4c5a5e" strokeWidth="1.300" className="mr-0.5">
          <path d="M1.500 3.500h9v6h-9zM0 5h12M3 1v2M9 1v2M3 10v1.500M9 10v1.500" />
        </svg>
      }
    >
      <div className="mx-0.5 mb-0.5 flex flex-1 bg-[#6a6e73]">
        <div className="flex w-20 flex-col items-center">
          <div className="flex w-full items-start pt-[9px] pl-[3px]">
            <button type="button" className="size-[66px] shrink-0 rounded-full border border-[#4c4f52] bg-[#5a5a5a] pr-0.5 text-[16px] font-bold text-[#f5c92f]">
              Step
            </button>
            <span className="-ml-1.5 size-3 shrink-0 rounded-full border border-[#4c4f52] bg-[#5a5a5a]" />
          </div>
          <button type="button" className="mt-[21px] mr-2 size-[43px] rounded-full border border-[#4c4f52] bg-[#5a5a5a] text-[11px] font-bold text-[#f5c92f]">
            Reset
          </button>
          <div className="mt-2.5 mr-2 flex items-center gap-px">
            <div className="flex flex-col items-center text-[8px] leading-[6px] text-[#d8dadc]">
              <span>Max</span>
              <span className="text-[6px]">for</span>
              <span>Cats</span>
            </div>
            <svg width="9" height="20" viewBox="0 0 9 20" fill="#fff">
              <path d="M4 1l1.500 1L7 1c1.500 2 .5 3 1 5 1 4 1 6 .5 9H1c-1-4 2.500-6 2.500-9C3 4 3 3 4 1z" />
              <path d="M1 15c3 1 3 3 1 4" fill="none" stroke="#fff" />
            </svg>
          </div>
          <Box className="mt-[3px] mr-2 w-[43px]">Fold</Box>
        </div>
        <div className="flex flex-1 flex-col pt-[3px]">
          <div className="flex h-[17px] items-center">
            <Box tone="amber" className="h-[17px] w-[50px]">
              Pitch
            </Box>
            <Box className="ml-1 h-[17px] w-[50px]">Veloc.</Box>
            <Box className="ml-1 h-[17px] w-[50px]">Duration</Box>
            <label className="ml-6 flex items-center gap-[3px]">
              <span className={labelCls}>Loop Start</span>
              <input className={inputCls} defaultValue="1" />
            </label>
            <label className="ml-[5px] flex items-center gap-[3px]">
              <span className={labelCls}>End</span>
              <input className={inputCls} defaultValue="16" />
            </label>
            <label className="mr-[14px] ml-auto flex items-center gap-2">
              <input type="checkbox" className="size-[14px] appearance-none border border-[#55585c] bg-[#cccccc]" />
              <span className={labelCls}>MIDI Thru</span>
            </label>
          </div>
          <div className="mt-px flex">
            <div className="flex w-[50px] bg-[#a5a5a5]">
              <div className="relative w-7 text-[11px] leading-none text-[#1a1a1a]">
                <span className="absolute top-[61px] left-0.5">C4</span>
                <span className="absolute top-[154px] left-0.5">B2</span>
                <span className="absolute top-[72px] left-0 h-px w-[50px] bg-[#4a4a4a]" />
              </div>
              <svg width="22" height="165" viewBox="0 0 22 165" className="block">
                <rect y="15" width="21" height="150" fill="#f6f6f6" />
                {lightRows.map((r) => (
                  <rect key={r} y={15 + r * rh} width="21" height={rh} fill="#000" />
                ))}
                {[3, 8, 15, 20].map((r) => (
                  <path key={r} d={`M0 ${15 + r * rh}h21`} stroke={r === 8 ? '#4a4a4a' : '#bbb'} />
                ))}
              </svg>
            </div>
            <div className="border-l border-[#3a3a3a]">
              <div className="flex h-[15px] items-center justify-between border border-[#1f1f1f] bg-[#c8c8c8] text-[11px] leading-none text-[#1a1a1a]">
                <span className="flex items-center gap-0.5">
                  <svg width="6" height="11" viewBox="0 0 6 11">
                    <path d="M0 0l5 5.500L0 11z" fill="#a5a5a5" stroke="#3a3a3a" />
                  </svg>
                  1
                </span>
                <span className="flex items-center gap-0.5">
                  16
                  <svg width="6" height="11" viewBox="0 0 6 11">
                    <path d="M6 0L1 5.500 6 11z" fill="#a5a5a5" stroke="#3a3a3a" />
                  </svg>
                </span>
              </div>
              <PianoRoll />
            </div>
          </div>
        </div>
      </div>
    </Device>
  );
}

const DARK = '.#.##.#.#.##';
const FULL = '############';
const scaleRows = [DARK, FULL, '#########YYY', DARK, FULL, '.#.##.#YY.##', FULL, '.#.##YY.#.##', FULL, '##YYY#######', DARK, FULL, 'YY.##.#.#.##'];

function ScaleDevice() {
  return (
    <Device
      title="Scale"
      width="w-[278px]"
      shell="bg-[#a5a5a5]"
      head="bg-[#bababa]"
      extra={
        <button type="button" aria-label="Use current scale" className="flex size-[15px] items-center justify-center border border-[#4a4a4a] text-[11px] leading-none font-bold">
          ♭<span className="-mt-1 text-[9px]">#</span>
        </button>
      }
    >
      <div className="flex flex-1 gap-1 p-1 pt-[5px] pr-[5px]">
        <div className="grid h-[184px] w-[171px] shrink-0 grid-cols-12 gap-px rounded-sm bg-[#262626] p-1">
          {scaleRows.flatMap((row, y) =>
            row.split('').map((c, x) => <span key={`${x}-${y}`} className={clsx(c === 'Y' ? 'bg-[#ffb800]' : c === '#' ? 'bg-[#5c5c5c]' : 'bg-[#262626]')} />),
          )}
        </div>
        <div className="flex flex-1 flex-col items-center text-[11px] leading-[14px] text-[#1f1f1f]">
          <div className="flex h-[17px] w-full gap-[25px] border-b border-[#767676] pl-px">
            <span>In</span>
            <span>Out</span>
          </div>
          <div className="mt-[6px] w-full">
            <Select label="Base" value="C#" />
          </div>
          <div className="mt-[3px] w-full">
            <Select label="Scale name" value="Minor Pentatonic" />
          </div>
          <div className="mt-[6px]">Transpose</div>
          <Knob angle={0} marker={INK} from={0} />
          <div className="-mt-[3px]">0 st</div>
          <Box tone="off" className="mt-[7px] w-12">
            Fold
          </Box>
          <div className="mt-2 flex w-full items-center">
            <span className="w-12">Lowest</span>
            <span>Range</span>
            <span className="ml-auto size-1.5 rounded-full bg-[#666]" />
          </div>
          <div className="flex w-full justify-between">
            <input aria-label="Lowest" defaultValue="C-2" className="h-[15px] w-[45px] border border-[#5c5c5c] bg-[#dedede] text-center outline-none" />
            <input aria-label="Range" defaultValue="+128 st" className="h-[15px] w-[45px] border border-[#5c5c5c] bg-[#2bc4da] text-center outline-none" />
          </div>
        </div>
      </div>
    </Device>
  );
}

const macros: { n: string; v: string; a: number; fill?: boolean; g?: boolean }[] = [
  { n: 'Filter', v: '1.54 kHz', a: 108, fill: true },
  { n: 'Cabinet Switch', v: '0', a: -152 },
  { n: 'Pre Verb', v: '33 %', a: -24, fill: true },
  { n: 'Post Verb', v: '80 %', a: 150, fill: true },
  { n: 'Attack', v: '1.00 ms', a: -122, fill: true, g: true },
  { n: 'Decay', v: '1.75 s', a: 14, fill: true, g: true },
  { n: 'Sustain', v: '-10 dB', a: 20, fill: true, g: true },
  { n: 'Release', v: '228 ms', a: -52, fill: true, g: true },
];

function RackIcon({ label, children, dark }: { label: string; children: ReactNode; dark?: boolean }) {
  return (
    <button type="button" aria-label={label} className={clsx('flex size-[15px] items-center justify-center rounded-full border border-[#333]', dark ? 'bg-[#262626]' : 'bg-[#cccccc]')}>
      <svg width="9" height="9" viewBox="0 0 9 9" fill="none" stroke={dark ? '#c4c4c4' : '#1a1a1a'} strokeWidth="1.300">
        {children}
      </svg>
    </button>
  );
}

function DistDevice() {
  return (
    <Device
      title="Dist Guitaryish"
      width="w-[264px]"
      shell="bg-[#bababa]"
      head="bg-[#bababa]"
      extra={
        <>
          <Box className="mr-0.5 w-[35px] rounded-full text-[12px]">Rand</Box>
          <Box className="mr-px w-7 text-[12px]">Map</Box>
        </>
      }
    >
      <div className="mx-0.5 mb-0.5 flex flex-1 bg-[#a5a5a5]">
        <div className="flex w-[22px] flex-col items-center gap-1 pt-[5px]">
          <button type="button" aria-label="Macro controls">
            <svg width="15" height="15" viewBox="0 0 15 15" fill="none" stroke="#ffb800" strokeWidth="2" className="block">
              <circle cx="7.500" cy="7.500" r="6.300" strokeWidth="1.800" />
              <path d="M5.200 11.500A3.600 3.600 0 1 1 11 8" />
              <path d="M7.500 7.500l3.500 4" strokeWidth="1.800" />
            </svg>
          </button>
          <RackIcon label="Add macro">
            <path d="M4.500 0v9M0 4.500h9" />
          </RackIcon>
          <RackIcon label="Remove macro">
            <path d="M0 4.500h9" />
          </RackIcon>
          <RackIcon label="Variations" dark>
            <path d="M.5 2h8v6h-8zM3 .8h3v1H3z" fill="#c4c4c4" stroke="none" />
            <path d="M4.500 3v4M2.500 5h4" stroke="#262626" strokeWidth="1.200" />
          </RackIcon>
          <RackIcon label="Devices" dark>
            <path d="M.7 1.500h7.600v6H.7z" strokeWidth="1" />
            <path d="M.7 3.500h7.600" strokeWidth="1" />
          </RackIcon>
          <RackIcon label="Chain list" dark>
            <path d="M0 1.500h1.500M3 1.500h6M0 4.500h1.500M3 4.500h6M0 7.500h1.500M3 7.500h6" strokeWidth="1" />
          </RackIcon>
        </div>
        <div className="grid flex-1 grid-cols-4 grid-rows-2 gap-x-0.5 gap-y-[3px] py-[5px] pr-[6px] pb-[3px]">
          {macros.map((m) => (
            <div key={m.n} className="flex flex-col items-center overflow-hidden rounded-sm border border-[#767676] text-[11px] leading-[13px] text-[#1a1a1a]">
              <div className={clsx('flex h-8 w-full justify-center px-0.5 pt-[3px] text-center', m.g ? 'bg-[#3ec300]' : 'bg-[#fc6e00]')}>
                <span className={m.g || m.n === 'Filter' ? '' : 'w-11'}>{m.n}</span>
              </div>
              <div className="mt-[6px]">
                <Knob angle={m.a} fill={m.fill ? CYAN : undefined} />
              </div>
              <div className="-mt-px whitespace-nowrap">{m.v}</div>
            </div>
          ))}
        </div>
      </div>
    </Device>
  );
}

function Param({ label, value, angle = -150, r = 14, fill, className }: { label: string; value: string; angle?: number; r?: number; fill?: string; className?: string }) {
  return (
    <div className={clsx('flex flex-col items-center text-[11px] leading-[14px] whitespace-nowrap text-[#1f1f1f]', className)}>
      <span>{label}</span>
      <Knob r={r} angle={angle} base="#6b6b6b" fill={fill} />
      <span className="-mt-0.5">{value}</span>
    </div>
  );
}

function AutoFilter() {
  const field = 'flex h-[15px] w-[58px] items-center justify-center border border-[#484848] bg-transparent text-center text-[11px] leading-none outline-none';
  return (
    <Device title="Auto Filter" on={false} width="w-[500px]" shell="bg-[#bababa]" head="bg-[#bababa]">
      <div className="mx-0.5 mb-0.5 flex flex-1 gap-0.5 text-[#1f1f1f]">
        <div className="flex w-[21px] flex-col items-center gap-1 rounded-sm bg-[#a5a5a5] pt-[5px] pb-1.5">
          <Circle label="Expand sidechain">
            <Down className="text-[#555]" />
          </Circle>
          <Circle label="Sidechain listen">
            <svg width="9" height="9" viewBox="0 0 9 9" fill="none" stroke="#666" strokeWidth="1.500">
              <path d="M2 8C0 5 1 1 4.500 1S9 5 7 8M2.500 5v4M6.500 5v4" />
            </svg>
          </Circle>
          <span className="mt-auto rotate-180 text-[11px] leading-none [writing-mode:vertical-rl]">Sidechain</span>
          <span className="size-2 rounded-full bg-[#6b6b6b]" />
        </div>
        <div className="flex w-[67px] flex-col items-center rounded-sm bg-[#a5a5a5]">
          <Param label="Freq" value="20.0 Hz" r={20} className="mt-1" />
          <div className="mt-[14px] w-[58px]">
            <span className="relative block">
              <Select label="Filter type" value="" plain />
              <svg width="20" height="10" viewBox="0 0 20 10" className="pointer-events-none absolute top-[3px] left-[3px]" fill="none" stroke="#1a1a1a" strokeWidth="1.300">
                <path d="M0 1h13c3 0 3 2 3 8" />
              </svg>
            </span>
          </div>
          <div className="mt-[3px] flex w-[58px] justify-between">
            <Box tone="off" className="w-[27px]">12</Box>
            <Box tone="white" className="w-[27px]">24</Box>
          </div>
          <Param label="Res" value="0.0 %" className="mt-3" />
        </div>
        <div className="flex flex-1 flex-col">
          <div className="flex h-[124px] flex-col overflow-hidden rounded-sm bg-[#262626]">
            <svg height="100" className="block w-full" viewBox="0 0 335 100" preserveAspectRatio="none" fill="none">
              <path d="M78.500 0v100M189.500 0v100M300.500 0v100M0 50.500h335" stroke="#484848" />
              <path d="M0 75c10 8 18 16 26 25" stroke="#b0b0b0" strokeWidth="1.500" />
              <circle cx="7" cy="92" r="6.500" stroke="#b0b0b0" strokeWidth="1.500" />
              <path d="M0 99.500h335" stroke="#6e6e6e" />
            </svg>
            <div className="flex flex-1 items-center pl-[7px] text-[11px] leading-none text-[#b4b4b4]">
              <span className="w-[37px] font-bold text-[#e0e0e0]">LFO</span>
              <button type="button" className="h-[13px] w-10 bg-[#f0f0f0] leading-none text-[#767676]">Phase</button>
              <span className="ml-[19px]">Ø</span>
              <span className="ml-1.5 w-12">4.0°</span>
              <svg width="12" height="12" viewBox="0 0 12 12" fill="none" stroke="#b4b4b4" strokeWidth="1.200">
                <path d="M0 5C0 0 3 0 3 4v2c0 5 3 5 3 0V3" />
                <path d="M6.500 9c.5 3 2.500 3 2.500 0V8c0-3 2.500-3 2.500 0v3" strokeDasharray="1.500 1" />
              </svg>
              <span className="ml-1 w-[50px]">0.0°</span>
              <svg width="10" height="11" viewBox="0 0 10 11" fill="none" stroke="#b4b4b4" strokeWidth="1.200">
                <path d="M3 1L.8 10h7.700L7.500 6M3.500 8L9 .5M3 1.200h2.500" />
              </svg>
              <span className="ml-1.5">None</span>
              <Down size={7} className="mx-[9px]" />
              <span>8</span>
            </div>
          </div>
          <div className="mt-[3px] flex flex-1">
            <Param label="LFO Amt" value="0.0 %" className="ml-3 w-[52px] pt-[5px]" />
            <Param label="Rate" value="1.00 Hz" angle={-42} fill="#f4f4f4" className="ml-2 w-[54px] pt-[5px]" />
            <div className="ml-[7px] flex w-[104px] flex-col gap-[5px] pt-[5px] text-[11px] leading-none">
              <div className="flex h-[15px] items-center justify-between">
                Wave
                <span className="relative w-[58px]">
                  <Select label="Wave" value="" plain />
                  <svg width="18" height="11" viewBox="0 0 18 11" className="pointer-events-none absolute top-0.5 left-[3px]" fill="none" stroke="#1a1a1a" strokeWidth="1.300">
                    <path d="M0 9c4 0 3-8 6-8s3 9 6 9 3-6 5-8" />
                  </svg>
                </span>
              </div>
              <label className="flex h-[15px] items-center justify-between">
                Morph
                <input className={field} defaultValue="0.0 %" />
              </label>
              <div className="flex h-[15px] items-center justify-between">
                Mode
                <span className="w-[58px]">
                  <Select label="Mode" value="Rate" plain />
                </span>
              </div>
            </div>
            <div className="ml-auto flex w-[92px] justify-center rounded-sm bg-[#a5a5a5] pt-[5px]">
              <Param label="Envelope" value="0.0 %" angle={0} />
            </div>
          </div>
        </div>
        <div className="flex w-[67px] flex-col items-center rounded-sm bg-[#a5a5a5]">
          <Param label="Drive" value="0.0 %" className="mt-1" />
          <div className="mt-[3px] w-[58px]">
            <Select label="Circuit" value="SVF" plain />
          </div>
          <div className="mt-[9px] flex w-[58px] items-center justify-between">
            <Box tone="off" className="w-[45px]">Clip</Box>
            <span className="size-2 rounded-full bg-[#6b6b6b]" />
          </div>
          <input aria-label="Output" className={clsx(field, 'mt-[3px]')} defaultValue="0.0 dB" />
          <Param label="Dry/Wet" value="100 %" angle={150} fill="#f4f4f4" className="mt-[11px]" />
        </div>
      </div>
    </Device>
  );
}

/* ---------- status bar ---------- */

function MiniChain() {
  return (
    <svg width="110" height="22" viewBox="0 0 110 22" className="block shrink-0">
      <rect width="110" height="22" fill="#b0b0b0" />
      <rect x="0" y="2" width="17" height="19" fill="#262626" />
      <path d="M1 19h12M1 15h12M1 11h15M1 7h15M4 3v17M8 3v17M12 3v17" stroke="#5c5c5c" strokeWidth="0.800" />
      <path d="M1 20h3M4 16h3M7 12h3M9 9h3M12 6h3" stroke="#ffb800" strokeWidth="2" />
      <rect x="18" y="2" width="11" height="19" fill="#a5a5a5" />
      <circle cx="23.500" cy="11" r="2" fill="none" stroke="#555" />
      <path d="M19 5h9" stroke="#ddd" strokeWidth="1.500" />
      <path d="M24 19.500h5" stroke="#2b8fd0" strokeWidth="2" />
      <path d="M30.500 0v22M60 0v22" stroke="#808080" strokeWidth="1.500" />
      <rect x="34" y="2" width="24" height="4" fill="#fc6e00" />
      <rect x="34" y="12" width="24" height="3.500" fill="#3ec300" />
      <path d="M35 9h22M35 19h22" stroke="#7f9298" strokeWidth="3" strokeDasharray="3 3.300" />
      <rect x="70" y="2" width="34" height="13" fill="#262626" />
      <path d="M70 18.500h36" stroke="#e4e4e4" strokeWidth="3" strokeDasharray="3 3" />
      <path d="M63 2v18M66 2v18" stroke="#888" strokeWidth="1.500" strokeDasharray="3 2" />
    </svg>
  );
}

function StatusBar() {
  return (
    <footer className="mt-2 flex h-[26px] items-center pr-[11px] pl-[13px]">
      <button type="button" aria-label="Info view" className="flex size-[17px] shrink-0 items-center justify-center rounded-full bg-[#a5a5a5] text-[13px] leading-none font-bold text-[#808080]">
        i
      </button>
      <div className="ml-[18px] h-[21px] min-w-0 flex-1 rounded-[3px] bg-[#a5a5a5]" />
      <button type="button" aria-label="Preview" className="ml-2.5 flex h-[21px] w-[22px] shrink-0 items-center justify-center rounded-l-[3px] bg-[#a5a5a5]">
        <svg width="8" height="9" viewBox="0 0 8 9">
          <path d="M0 0l8 4.500L0 9z" fill="#111" />
        </svg>
      </button>
      <div className="ml-px flex h-[21px] w-[226px] shrink-0 items-center overflow-hidden rounded-r-[3px] bg-[#b9c6c8] pl-px">
        <div className="-mt-1 h-2 w-full bg-[#2b2b2b]" />
      </div>
      <button type="button" aria-label="Device chain" className="ml-2.5 flex h-[21px] w-[21px] shrink-0 items-center justify-center rounded-l-[3px] bg-[#ffb800]">
        <svg width="8" height="7" viewBox="0 0 8 7">
          <path d="M0 7h8L4 0z" fill="#111" />
        </svg>
      </button>
      <div className="ml-0.5 flex h-[21px] w-[84px] shrink-0 items-center justify-center bg-[#a5a5a5] text-[11px] font-semibold text-[#1f1f1f]">Trigger Lead</div>
      <button type="button" aria-label="Device overview" className="flex h-[26px] w-[168px] shrink-0 items-center overflow-hidden rounded-md border-2 border-[#3c3f40] bg-[#b0b0b0]">
        <span className="w-[54px] shrink-0 text-left text-[12px] leading-none whitespace-nowrap text-[#111]">TriggerTu</span>
        <MiniChain />
      </button>
      <button type="button" aria-label="Mixer sections" className="ml-5 flex shrink-0 items-center gap-2">
        <svg width="17" height="15" viewBox="0 0 17 15">
          <path d="M1.500 4v11M6 0v15M10.500 6v9M15 2v13" stroke="#ffb800" strokeWidth="2" />
        </svg>
        <Down className="text-[#a5a5a5]" />
      </button>
    </footer>
  );
}

export default function App() {
  return (
    <div className="min-h-screen bg-white px-14 font-['Inter','DejaVu_Sans',sans-serif]">
      <div className="h-[38px] bg-linear-to-b from-white from-30% to-[#ececec]" />
      <div className="min-w-[1500px] overflow-hidden rounded-[10px] border-t border-[#a8a8a8] bg-[#808080] pb-2">
        <div className="grid h-7 grid-cols-[1fr_auto_1fr] items-center pl-2">
          <div className="flex gap-2">
            <button type="button" aria-label="Close" className="flex size-3 items-center justify-center rounded-full border border-[#d8402f] bg-[#ff5f52]">
              <span className="size-1 rounded-full bg-[#7a0f08]" />
            </button>
            <button type="button" aria-label="Minimize" className="size-3 rounded-full border border-[#d79a1c] bg-[#fdbc2e]" />
            <button type="button" aria-label="Zoom" className="size-3 rounded-full border border-[#1ea52f] bg-[#27c840]" />
          </div>
          <h1 className="pb-0.5 pl-2 text-[13px] leading-none font-bold text-[#303030]">Controllerism from Class</h1>
        </div>
        <Toolbar />
        <Session />
        <div className="mt-2 flex pr-2.5">
          <Dots />
          <TriggerTune />
          <Dots />
          <ScaleDevice />
          <Dots />
          <DistDevice />
          <Meter wide />
          <AutoFilter />
          <Meter />
          <div className="flex h-[212px] min-w-0 flex-1 items-center justify-center rounded-[3px] bg-[#a5a5a5] text-[11px] text-[#1f1f1f]">Drop Audio Effects Here</div>
        </div>
        <StatusBar />
      </div>
    </div>
  );
}
